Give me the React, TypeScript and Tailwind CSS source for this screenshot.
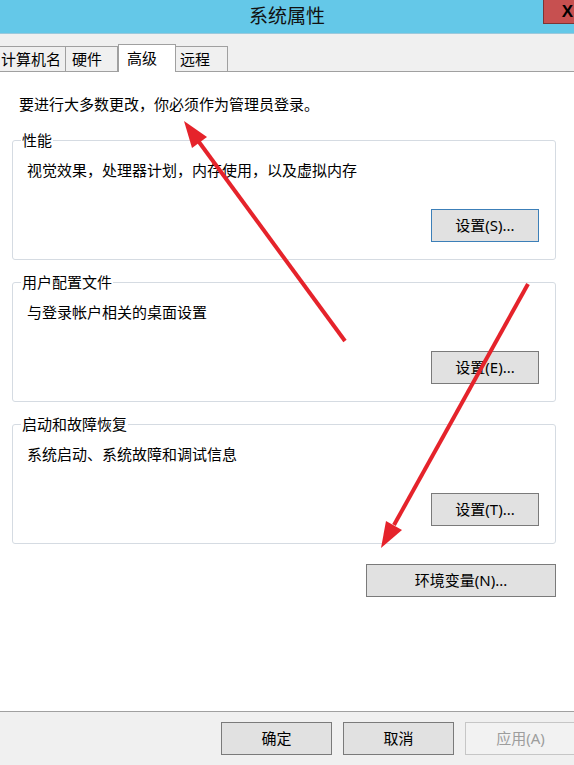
import React from "react";

const font = "font-['Noto_Sans','Noto_Sans_CJK_SC',sans-serif]";

interface GroupProps {
  title: string;
  text: string;
  button: string;
  focused?: boolean;
}

const Btn = ({
  label,
  className = "",
  focused = false,
  disabled = false,
}: {
  label: string;
  className?: string;
  focused?: boolean;
  disabled?: boolean;
}) => (
  <button
    className={`h-[33px] flex items-center justify-center text-[15px] leading-none border ${
      disabled
        ? "bg-[#f2f2f2] border-[#c6c6c6] text-[#9d9d9d]"
        : focused
          ? "bg-[#e1e1e1] border-[#3c7fb8] text-black"
          : "bg-[#e1e1e1] border-[#7a7a7a] text-black"
    } ${className}`}
  >
    {label}
  </button>
);

const Group = ({ title, text, button, focused }: GroupProps) => (
  <fieldset className="border border-[#d5dbe2] rounded-[3px] pl-[14px] pr-[16px] pb-[17px] min-w-0">
    <legend className="ml-[-6px] px-[1px] text-[15px] leading-[20px] text-black">
      {title}
    </legend>
    <div className="pt-[10px] text-[15px] leading-[20px] text-black">{text}</div>
    <div className="mt-[29px] flex justify-end">
      <Btn label={button} focused={focused} className="w-[108px]" />
    </div>
  </fieldset>
);

const tabs = [
  { label: "计算机名", w: "w-[66px]", pl: "pl-[1px]" },
  { label: "硬件", w: "w-[52px]", pl: "pl-[6px]" },
  { label: "高级", w: "w-[58px]", pl: "pl-[8px]", active: true },
  { label: "远程", w: "w-[52px]", pl: "pl-[4px]" },
];

export default function App() {
  return (
    <div className={`relative w-[574px] h-[765px] overflow-hidden flex flex-col bg-white ${font}`}>
      {/* Title bar */}
      <div className="h-[34px] shrink-0 flex bg-[#64c8e8] border-b border-[#9cc9dc]">
        <div className="flex-1" />
        <div className="flex items-center text-[19px] leading-none text-[#111]">系统属性</div>
        <div className="flex-1 flex justify-end items-start">
          <div className="w-[31px] h-[24px] bg-[#c75050] border-l border-b border-[#7d3434] flex items-center justify-end pr-[1px]">
            <span className="font-['Liberation_Sans',sans-serif] font-bold text-[17px] leading-none text-black">
              X
            </span>
          </div>
        </div>
      </div>

      {/* Tabs */}
      <div className="h-[38px] shrink-0 flex items-end bg-[#f0f0f0] border-b border-[#a0a0a0]">
        {tabs.map((t) =>
          t.active ? (
            <div
              key={t.label}
              className={`${t.w} ${t.pl} h-[28px] -mb-px bg-white border border-b-0 border-[#a0a0a0] flex items-center text-[15px] leading-none text-black`}
            >
              {t.label}
            </div>
          ) : (
            <div
              key={t.label}
              className={`${t.w} ${t.pl} h-[25px] bg-[#f0f0f0] border-t border-r border-[#a0a0a0] flex items-center pt-[1px] text-[15px] leading-none text-black`}
            >
              {t.label}
            </div>
          ),
        )}
      </div>

      {/* Content */}
      <div className="flex-1 flex flex-col pl-[12px] pr-[18px]">
        <p className="pt-[22px] pl-[7px] text-[15px] leading-[20px] text-black">
          要进行大多数更改，你必须作为管理员登录。
        </p>
        <div className="mt-[16px] flex flex-col gap-[12px]">
          <Group
            title="性能"
            text="视觉效果，处理器计划，内存使用，以及虚拟内存"
            button="设置(S)..."
            focused
          />
          <Group title="用户配置文件" text="与登录帐户相关的桌面设置" button="设置(E)..." />
          <Group title="启动和故障恢复" text="系统启动、系统故障和调试信息" button="设置(T)..." />
        </div>
        <div className="mt-[20px] flex justify-end">
          <Btn label="环境变量(N)..." className="w-[190px]" />
        </div>
      </div>

      {/* Footer */}
      <div className="h-[54px] shrink-0 bg-[#f0f0f0] border-t border-[#a0a0a0] flex justify-end gap-[11px] pt-[10px] mr-[-2px]">
        <Btn label="确定" className="w-[111px]" />
        <Btn label="取消" className="w-[111px]" />
        <Btn label="应用(A)" className="w-[111px]" disabled />
      </div>

      {/* Annotation arrows */}
      <svg className="absolute inset-0 pointer-events-none" width="574" height="765">
        <line x1="345" y1="341" x2="199" y2="142" stroke="#e5232b" strokeWidth="4" />
        <polygon points="184,121 207,137 192,148" fill="#e5232b" />
        <line x1="528" y1="284" x2="394" y2="525" stroke="#e5232b" strokeWidth="4" />
        <polygon points="381,548 386,521 402,530" fill="#e5232b" />
      </svg>
    </div>
  );
}
